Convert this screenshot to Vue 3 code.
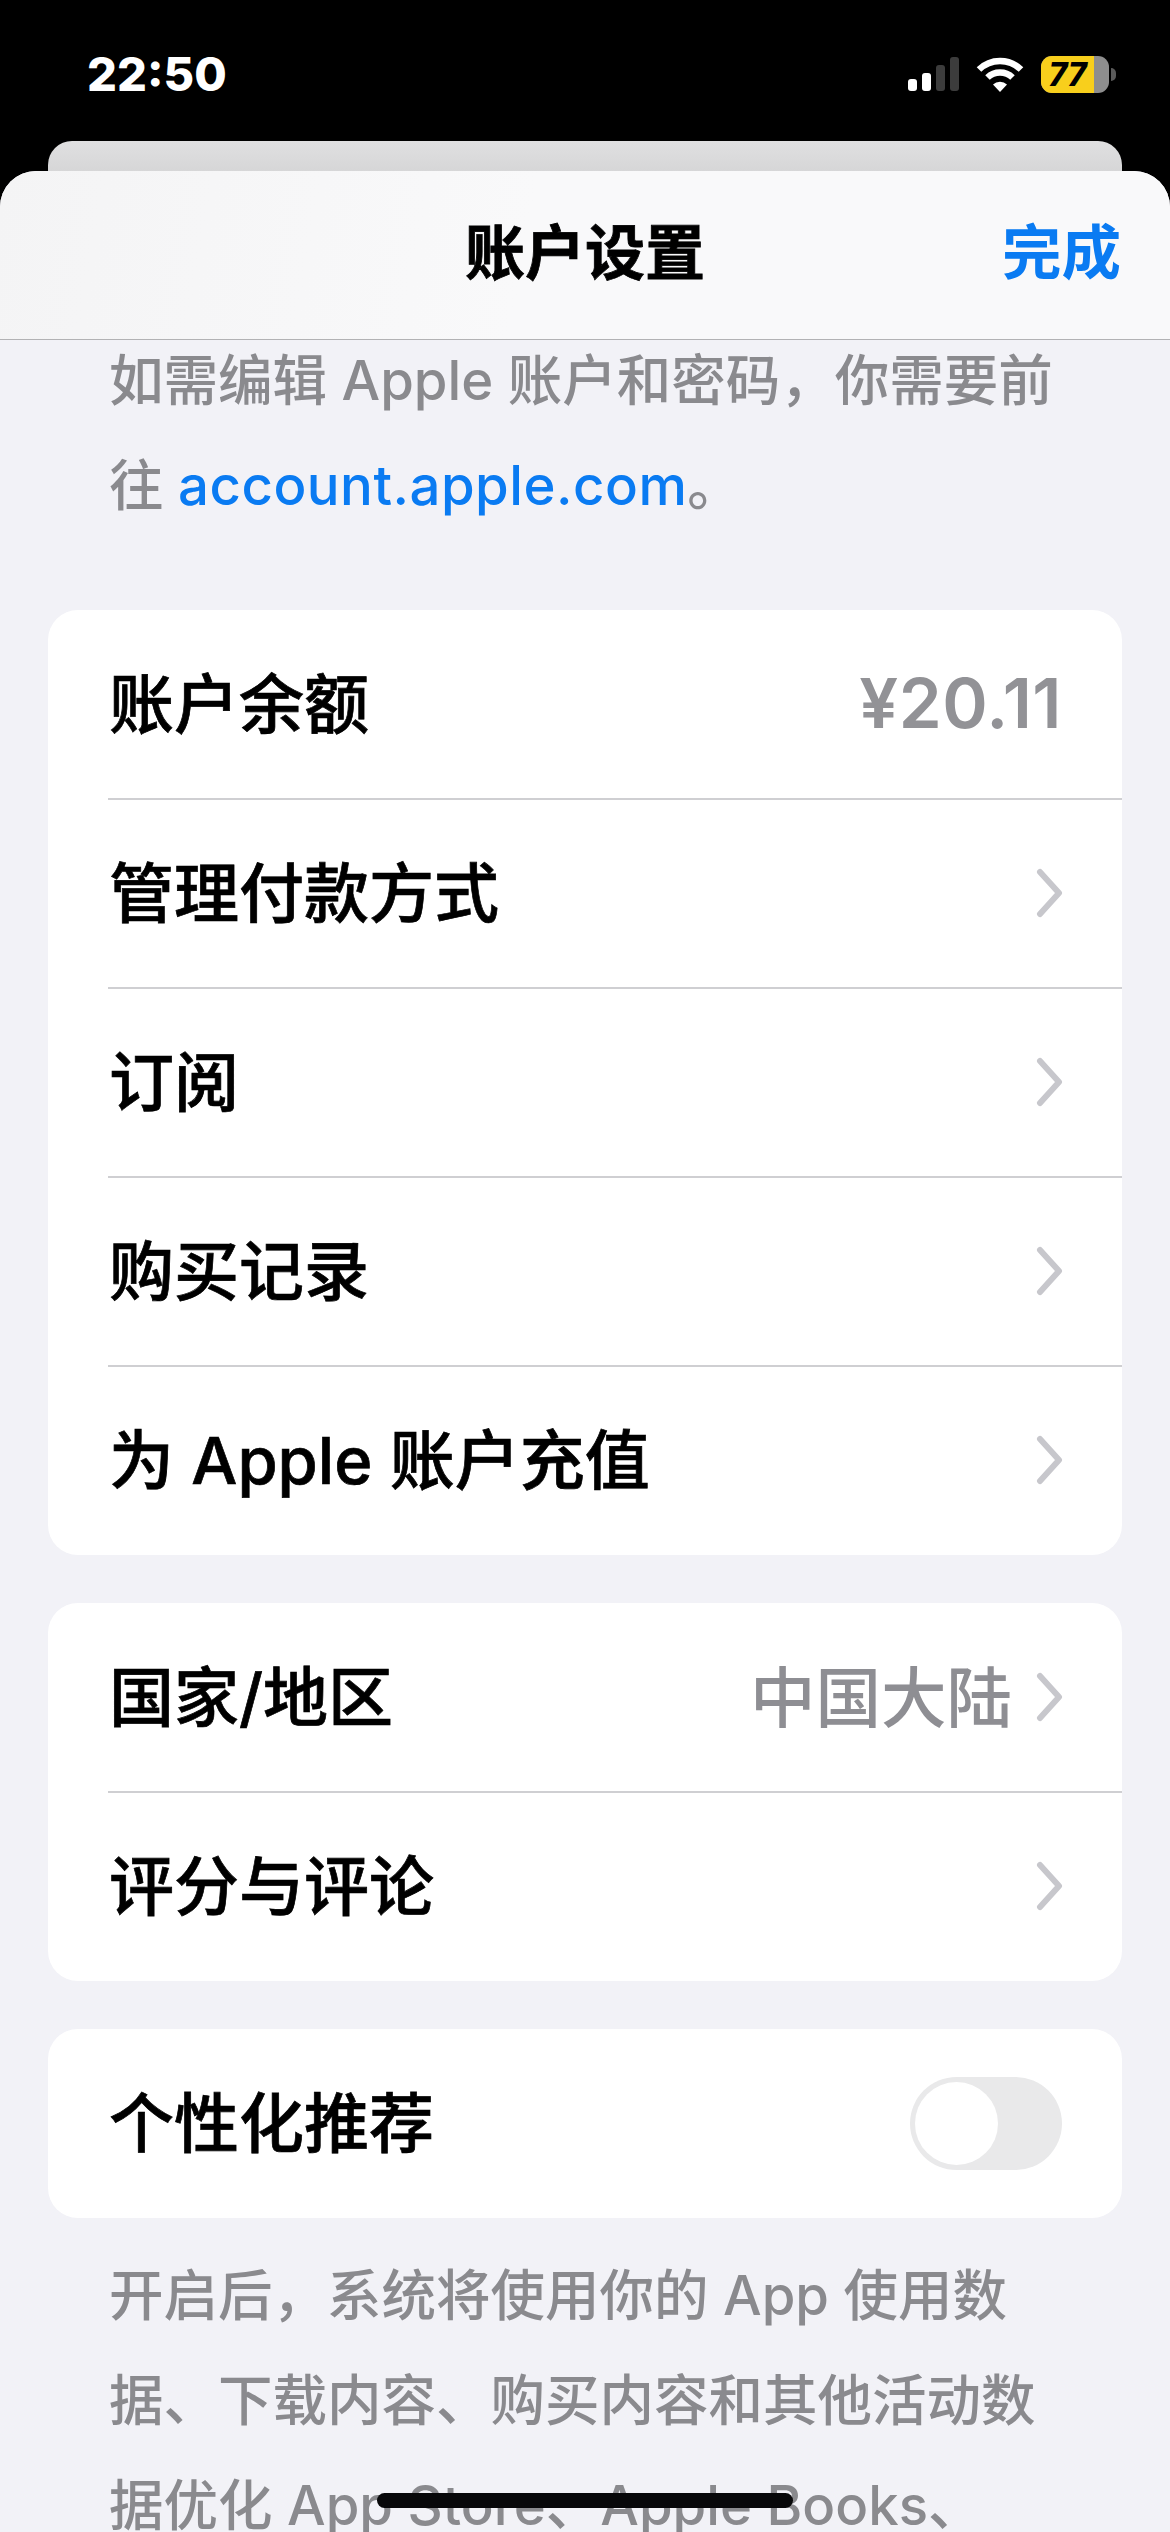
<script setup>
const balanceRows = [
  { label: '账户余额', value: '¥20.11', money: true },
  { label: '管理付款方式', arrow: true },
  { label: '订阅', arrow: true },
  { label: '购买记录', arrow: true },
  { label: '为 Apple 账户充值', arrow: true }
];

const regionRows = [
  { label: '国家/地区', value: '中国大陆', arrow: true },
  { label: '评分与评论', arrow: true }
];
</script>

<template>
  <div class="page">
    <div class="status-bar">
      <span class="time">22:50</span>
      <div class="status-icons">
        <div class="signal">
          <i class="bar b1"></i>
          <i class="bar b2"></i>
          <i class="bar b3"></i>
          <i class="bar b4"></i>
        </div>
        <svg class="wifi" width="48" height="36" viewBox="0 0 48 36">
          <path d="M3 13.5a30 30 0 0 1 42 0" fill="none" stroke="#fff" stroke-width="6.5" />
          <path d="M11.5 21.5a18 18 0 0 1 25 0" fill="none" stroke="#fff" stroke-width="6.5" />
          <path d="M17 28.5a10 10 0 0 1 14 0L24 36z" fill="#fff" />
        </svg>
        <div class="battery">
          <div class="battery-body">
            <div class="battery-level">77</div>
          </div>
          <i class="battery-nub"></i>
        </div>
      </div>
    </div>

    <div class="back-card"></div>

    <div class="sheet">
      <div class="nav">
        <span class="nav-title">账户设置</span>
        <span class="nav-done">完成</span>
      </div>

      <p class="note note-top">
        如需编辑 Apple 账户和密码，你需要前<br />
        往 <span class="link">account.apple.com</span>。
      </p>

      <div class="card card-first">
        <div v-for="row in balanceRows" :key="row.label" class="row">
          <span class="row-label">{{ row.label }}</span>
          <span v-if="row.value" class="row-value" :class="{ money: row.money }">{{ row.value }}</span>
          <svg v-if="row.arrow" class="chevron" width="28" height="50" viewBox="0 0 28 50">
            <path d="M4 4l19 21L4 46" fill="none" stroke="#c7c7cc" stroke-width="6" stroke-linecap="round" stroke-linejoin="round" />
          </svg>
        </div>
      </div>

      <div class="card">
        <div v-for="row in regionRows" :key="row.label" class="row">
          <span class="row-label">{{ row.label }}</span>
          <span v-if="row.value" class="row-value">{{ row.value }}</span>
          <svg v-if="row.arrow" class="chevron" width="28" height="50" viewBox="0 0 28 50">
            <path d="M4 4l19 21L4 46" fill="none" stroke="#c7c7cc" stroke-width="6" stroke-linecap="round" stroke-linejoin="round" />
          </svg>
        </div>
      </div>

      <div class="card">
        <div class="row">
          <span class="row-label">个性化推荐</span>
          <div class="toggle"><i class="knob"></i></div>
        </div>
      </div>

      <p class="note note-bottom">
        开启后，系统将使用你的 App 使用数<br />
        据、下载内容、购买内容和其他活动数<br />
        据优化 App Store、Apple Books、
      </p>
    </div>

    <div class="home-indicator"></div>
  </div>
</template>

<style>
html, body {
  margin: 0;
  background: #000;
}
</style>

<style scoped>
.page {
  position: relative;
  width: 1170px;
  height: 2532px;
  overflow: hidden;
  background: #000;
  font-family: Inter, "Noto Sans CJK SC", sans-serif;
}

.status-bar {
  height: 141px;
  box-sizing: border-box;
  padding: 50px 54px 0 87px;
  display: flex;
  justify-content: space-between;
  align-items: flex-start;
  color: #fff;
}

.time {
  font-size: 47px;
  font-weight: 800;
  line-height: 48px;
}

.status-icons {
  display: flex;
  align-items: center;
  height: 48px;
}

.signal {
  display: flex;
  align-items: flex-end;
  gap: 5px;
  height: 34px;
  margin-right: 17px;
}

.bar {
  width: 9px;
  border-radius: 3px;
  background: #fff;
}

.b1 { height: 12px; }
.b2 { height: 18px; }
.b3 { height: 26px; background: #3c3c3c; }
.b4 { height: 34px; background: #3c3c3c; }

.wifi {
  margin-right: 17px;
}

.battery {
  display: flex;
  align-items: center;
}

.battery-body {
  width: 68px;
  height: 37px;
  border-radius: 11px;
  overflow: hidden;
  background: #8e8e8e;
}

.battery-level {
  width: 53px;
  height: 100%;
  background: #f8cf1c;
  color: #000;
  font-size: 32px;
  font-weight: 800;
  line-height: 37px;
  text-align: center;
  font-style: italic;
}

.battery-nub {
  width: 5px;
  height: 13px;
  margin-left: 2px;
  border-radius: 0 6px 6px 0;
  background: #5a5a5a;
}

.back-card {
  height: 30px;
  margin: 0 48px;
  border-radius: 24px 24px 0 0;
  background: linear-gradient(#e0e0e1, #d6d6d7);
}

.sheet {
  height: 2361px;
  border-radius: 36px 36px 0 0;
  background: #f2f2f7;
  overflow: hidden;
}

.nav {
  position: relative;
  z-index: 1;
  height: 154px;
  padding-bottom: 14px;
  display: flex;
  align-items: center;
  justify-content: center;
  border-bottom: 1px solid #b2b2b4;
  background: linear-gradient(100deg, #f4f4f5, #f9f9fa 45%);
}

.nav-title {
  font-size: 60px;
  font-weight: 700;
  color: #000;
  -webkit-text-stroke: 0.8px #000;
}

.nav-done {
  position: absolute;
  right: 49px;
  top: 77px;
  transform: translateY(-50%);
  font-size: 59.5px;
  font-weight: 700;
  color: #0a7bf2;
}

.note {
  margin: 0;
  padding: 0 60px 0 109px;
  font-size: 54.5px;
  font-weight: 500;
  line-height: 105px;
  color: #8a8a8e;
  white-space: nowrap;
}

.note-top {
  margin-top: -12px;
}

.note-bottom {
  margin-top: 25px;
}

.link {
  color: #0a7bf2;
  letter-spacing: 0.5px;
}

.card {
  margin: 48px 48px 0;
  border-radius: 30px;
  background: #fff;
  overflow: hidden;
}

.card-first {
  margin-top: 72px;
}

.row {
  position: relative;
  height: 189px;
  box-sizing: border-box;
  padding: 0 60px 0 61px;
  display: flex;
  align-items: center;
}

.row + .row::before {
  content: "";
  position: absolute;
  left: 60px;
  right: 0;
  top: -1px;
  height: 2px;
  background: #cfcfd2;
}

.row-label {
  flex: 1;
  margin-bottom: 10px;
  font-size: 65px;
  font-weight: 500;
  color: #000;
  -webkit-text-stroke: 0.7px #000;
}

.row-value {
  margin-bottom: 8px;
  font-size: 65.5px;
  font-weight: 500;
  color: #8e8e93;
}

.money {
  margin-bottom: 4px;
  font-size: 69px;
  font-weight: 600;
  letter-spacing: 0.5px;
  color: #929296;
}

.chevron {
  flex: none;
  margin-left: 24px;
  margin-right: -2px;
  margin-bottom: 2px;
}

.toggle {
  position: relative;
  width: 152px;
  height: 93px;
  border-radius: 47px;
  background: #e9e9ea;
}

.knob {
  position: absolute;
  left: 5px;
  top: 5px;
  width: 83px;
  height: 83px;
  border-radius: 50%;
  background: #fff;
}

.home-indicator {
  position: absolute;
  left: 377px;
  bottom: 24px;
  width: 416px;
  height: 15px;
  border-radius: 8px;
  background: #08080a;
}
</style>
